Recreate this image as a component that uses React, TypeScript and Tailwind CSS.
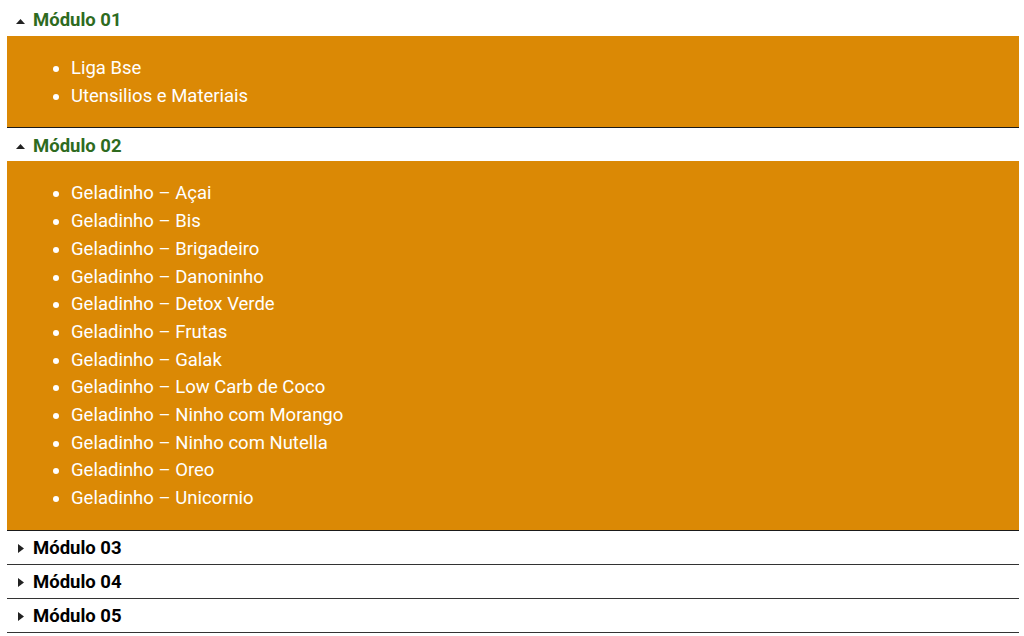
const modules = [
  { title: 'Módulo 01', open: true, items: ['Liga Bse', 'Utensilios e Materiais'] },
  {
    title: 'Módulo 02',
    open: true,
    items: [
      'Geladinho – Açai',
      'Geladinho – Bis',
      'Geladinho – Brigadeiro',
      'Geladinho – Danoninho',
      'Geladinho – Detox Verde',
      'Geladinho – Frutas',
      'Geladinho – Galak',
      'Geladinho – Low Carb de Coco',
      'Geladinho – Ninho com Morango',
      'Geladinho – Ninho com Nutella',
      'Geladinho – Oreo',
      'Geladinho – Unicornio',
    ],
  },
  { title: 'Módulo 03', open: false, items: [] },
  { title: 'Módulo 04', open: false, items: [] },
  { title: 'Módulo 05', open: false, items: [] },
]

function Caret({ open }: { open: boolean }) {
  return open ? (
    <svg width="9" height="5" viewBox="0 0 9 5" className="fill-[#222]">
      <path d="M0 5 L4.5 0 L9 5 Z" />
    </svg>
  ) : (
    <svg width="6" height="9" viewBox="0 0 6 9" className="fill-[#222]">
      <path d="M0 0 L6 4.5 L0 9 Z" />
    </svg>
  )
}

export default function App() {
  return (
    <div className="min-h-screen bg-white px-[7px] pt-[3px]" style={{ fontFamily: 'Roboto, "Liberation Sans", sans-serif' }}>
      <div className="w-[1012px]">
        {modules.map((m) => (
          <div key={m.title} className={m.open ? 'border-b border-[#1a1a1a]' : 'border-b border-[#333]'}>
            <div className="h-[33px] pt-[3px] flex items-center">
              <span className="w-[26px] flex justify-center pl-[1px]">
                <Caret open={m.open} />
              </span>
              <span className={`text-[18.5px] font-bold ${m.open ? 'text-[#2e6b1f]' : 'text-black'}`}>{m.title}</span>
            </div>
            {m.open && (
              <div className="bg-[#db8905] pt-[19px] pb-[17px] pl-[48px]">
                <ul className="list-disc pl-[16px] text-white text-[18.5px] leading-[27.7px]">
                  {m.items.map((it) => (
                    <li key={it}>{it}</li>
                  ))}
                </ul>
              </div>
            )}
          </div>
        ))}
      </div>
    </div>
  )
}
